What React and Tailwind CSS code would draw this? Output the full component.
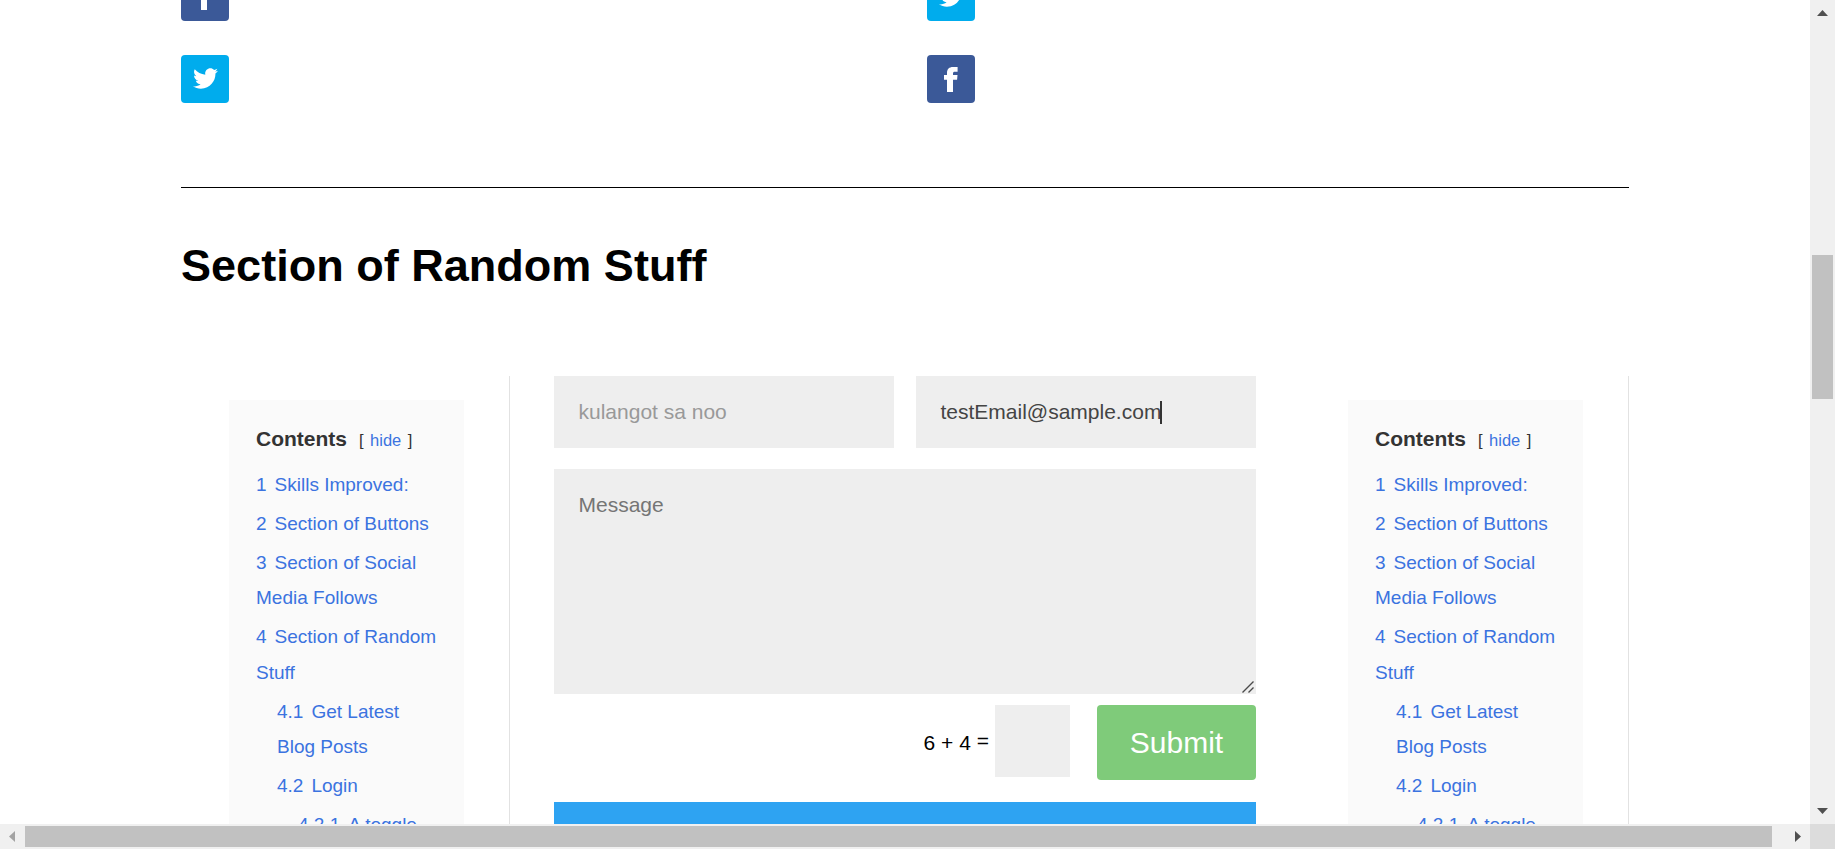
import { FaTwitter } from "react-icons/fa";

const TOC = [
  { n: "1", t: "Skills Improved:", pad: "pl-0" },
  { n: "2", t: "Section of Buttons", pad: "pl-0" },
  { n: "3", t: "Section of Social Media Follows", pad: "pl-0" },
  { n: "4", t: "Section of Random Stuff", pad: "pl-0" },
  { n: "4.1", t: "Get Latest Blog Posts", pad: "pl-[21px]" },
  { n: "4.2", t: "Login", pad: "pl-[21px]" },
  { n: "4.2.1", t: "A toggle", pad: "pl-[42px]" },
];

function FacebookMark() {
  return (
    <svg width="14" height="25" viewBox="0 0 14 25" fill="currentColor">
      <path d="M3 25V12.8H0V8H3V6C3 2 5.2 0 9 0H13.6V4.7H10.8C9.5 4.7 9 5.2 9 6.3V8H13.5L13.1 12.8H9V25Z" />
    </svg>
  );
}

function Social({ kind }) {
  const twitter = kind === "twitter";
  return (
    <a
      className={
        "flex size-12 items-center justify-center rounded-[4px] text-white " +
        (twitter ? "bg-[#00aced]" : "bg-[#3b5998]")
      }
    >
      {twitter ? <FaTwitter size={25} className="-mt-px" /> : <FacebookMark />}
    </a>
  );
}

function SocialColumn({ kinds }) {
  return (
    <div className="flex flex-col gap-[34px]">
      {kinds.map((k) => (
        <Social key={k} kind={k} />
      ))}
    </div>
  );
}

function Sidebar() {
  return (
    <aside className="flex h-[600px] w-[329px] shrink-0 border-r border-[#e2e2e2] pl-12 pt-6">
      <nav className="w-[235px] bg-[#fafafa] pl-[27px] pr-[27px] pt-[21px] text-[19px]">
        <p className="mb-[9.7px] flex h-[36px] items-baseline leading-[36px] text-[#333]">
          <b className="text-[21px]">Contents</b>
          <span className="ml-[12px] flex gap-[6.5px] text-[16.5px]">
            <span>[</span>
            <a className="text-[#3b73e0]">hide</a>
            <span>]</span>
          </span>
        </p>
        <ul className="flex flex-col gap-[3.5px] leading-[35.5px] text-[#3b73e0]">
          {TOC.map((i) => (
            <li key={i.n} className={i.pad}>
              <span className="mr-[8px]">{i.n}</span>
              {i.t}
            </li>
          ))}
        </ul>
      </nav>
    </aside>
  );
}

function ContactForm() {
  return (
    <main className="flex w-[702px] shrink-0 flex-col text-[21px]">
      <div className="flex justify-between">
        <div className="flex h-[72px] w-[340px] items-center bg-[#eee] pl-[24.5px] text-[#999]">kulangot sa noo</div>
        <div className="flex h-[72px] w-[340px] items-center bg-[#eee] pl-[24.5px] text-[#444]">
          testEmail@sample.com
          <span className="-ml-px h-[23px] w-0.5 bg-[#333]" />
        </div>
      </div>
      <div className="mt-[21px] flex h-[225px] items-start justify-between bg-[#eee] pl-[24.5px] text-[#757575]">
        <span className="pt-[19px] leading-[34px]">Message</span>
        <svg className="mb-px mr-[2px] self-end" width="12" height="12" stroke="#4a4a4a" strokeWidth="1.4" fill="none">
          <path d="M0.5 11.5 11.5 0.5M6.5 11.5 11.5 6.5" />
        </svg>
      </div>
      <div className="mt-[11px] flex items-start justify-end text-black">
        <span className="flex h-[75px] items-center whitespace-pre">
          6 + 4 <span className="pb-[4px]">=</span>
        </span>
        <div className="ml-[6px] h-[72px] w-[75px] bg-[#eee]" />
        <div className="ml-[27px] flex h-[75px] w-[159px] items-center justify-center rounded-[4px] bg-[#7fcb7a] text-[30px] text-white">
          Submit
        </div>
      </div>
      <div className="mt-[22px] h-[60px] bg-[#2ea3f2]" />
    </main>
  );
}

function Page() {
  return (
    <div className="h-[824px] overflow-hidden bg-white">
      <div className="ml-[181px] w-[1448px]">
        <div className="-mt-[27px] flex h-[214px] gap-[698px]">
          <SocialColumn kinds={["facebook", "twitter"]} />
          <SocialColumn kinds={["twitter", "facebook"]} />
        </div>
        <div className="h-px bg-black" />
        <h1 className="mt-[54px] h-[134px] text-[45px] font-bold leading-[48px] tracking-[0.02px] text-black">
          Section of Random Stuff
        </h1>
        <div className="flex">
          <Sidebar />
          <div className="w-[44px] shrink-0" />
          <ContactForm />
          <div className="w-[44px] shrink-0" />
          <Sidebar />
        </div>
      </div>
    </div>
  );
}

export default function App() {
  return (
    <div className="grid h-[849px] w-[1835px] grid-cols-[1810px_25px] grid-rows-[824px_25px] overflow-hidden font-['Liberation_Sans',Arial,sans-serif]">
      <Page />
      <div className="flex flex-col items-center bg-[#f0f0f0]">
        <svg width="11" height="6" className="mt-[10px] shrink-0" fill="#505050">
          <path d="M5.5 0 11 6H0z" />
        </svg>
        <div className="mt-[239px] h-[144px] w-[21px] bg-[#c1c1c1]" />
        <svg width="11" height="6" className="mb-[10px] mt-auto shrink-0" fill="#505050">
          <path d="M0 0H11L5.5 6z" />
        </svg>
      </div>
      <div className="flex items-center bg-[#f0f0f0]">
        <svg width="6" height="11" className="ml-[9px] shrink-0" fill="#a3a3a3">
          <path d="M6 0V11L0 5.5z" />
        </svg>
        <div className="ml-[10px] h-[21px] w-[1747px] bg-[#c1c1c1]" />
        <svg width="6" height="11" className="ml-auto mr-[9px] shrink-0" fill="#505050">
          <path d="M0 0V11L6 5.5z" />
        </svg>
      </div>
      <div className="bg-[#dcdcdc]" />
    </div>
  );
}
